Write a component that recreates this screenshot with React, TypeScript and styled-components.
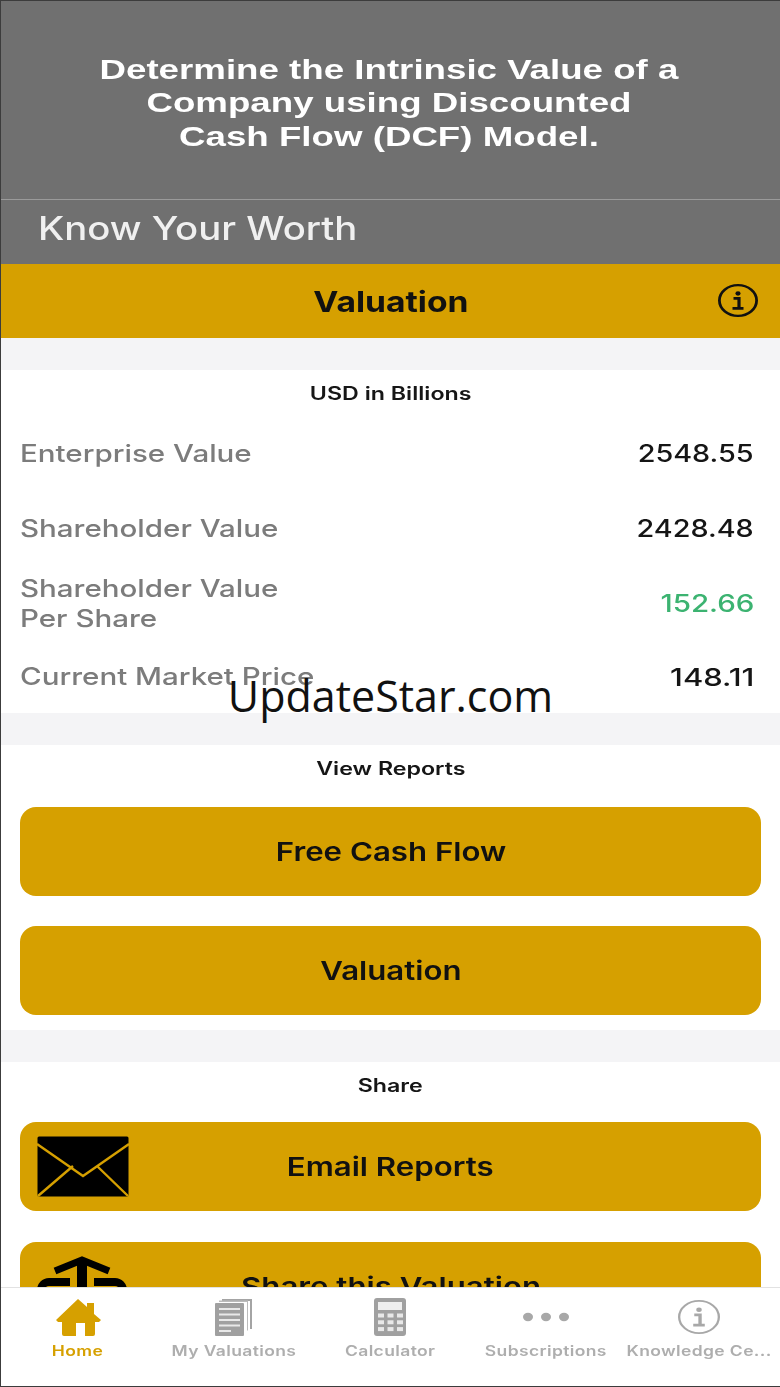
import React from 'react';
import styled, { createGlobalStyle } from 'styled-components';

const GOLD = '#d6a000';

const GlobalStyle = createGlobalStyle`
  html, body {
    margin: 0;
    padding: 0;
    height: 100%;
    background: #fff;
  }
  #root {
    height: 100%;
  }
`;

const Frame = styled.div`
  position: relative;
  box-sizing: border-box;
  width: 780px;
  height: 1387px;
  overflow: hidden;
  background: #fff;
  border-left: 1px solid #3c3c3c;
  border-top: 1px solid #3c3c3c;
  border-bottom: 1px solid #3c3c3c;
  font-family: Inter, 'Liberation Sans', sans-serif;
`;

// the source capture is soft, so the app screen is blurred a little
const Screen = styled.div`
  height: 100%;
  display: flex;
  flex-direction: column;
  filter: blur(0.55px);
`;

// the source capture is also stretched sideways
const Wide = styled.span<{ $scale: number; $origin?: string }>`
  display: inline-block;
  white-space: nowrap;
  transform: scaleX(${(p) => p.$scale});
  transform-origin: ${(p) => p.$origin || 'center'};
`;

const Hero = styled.div`
  height: 199px;
  flex: none;
  display: flex;
  align-items: center;
  justify-content: center;
  padding: 6px 3px 0 0;
  box-sizing: border-box;
  background: #707070;
  border-bottom: 1px solid #9a9a9a;
`;

const HeroTitle = styled.h1`
  margin: 0;
  color: #fff;
  font-family: 'Liberation Sans', Arial, sans-serif;
  font-size: 28px;
  font-weight: 700;
  line-height: 33.5px;
  text-align: center;
  transform: scaleX(1.31);
`;

const BrandBar = styled.div`
  height: 64px;
  flex: none;
  box-sizing: border-box;
  display: flex;
  align-items: center;
  padding: 0 0 9px 37px;
  background: #707070;
  color: #f0f0f0;
  font-size: 33px;
  font-weight: 500;
`;

const NavBar = styled.div`
  position: relative;
  height: 74px;
  flex: none;
  display: flex;
  align-items: center;
  justify-content: center;
  background: ${GOLD};
  color: #111;
  font-size: 29px;
  font-weight: 700;
`;

const NavInfo = styled.span`
  position: absolute;
  right: 22px;
  top: 20px;
  display: flex;
`;

const Content = styled.div`
  flex: 1;
  min-height: 0;
  overflow: hidden;
`;

const Sections = styled.div`
  display: flex;
  flex-direction: column;
  gap: 32px;
  padding-top: 32px;
  background: #f4f4f6;
`;

const Section = styled.section`
  background: #fff;
`;

const SectionTitle = styled.div`
  height: 46px;
  display: flex;
  align-items: center;
  justify-content: center;
  color: #161616;
  font-size: 18px;
  font-weight: 600;
`;

const ValueRow = styled.div<{ $height: number }>`
  height: ${(p) => p.$height}px;
  display: flex;
  align-items: center;
  justify-content: space-between;
  padding: 0 26px 0 19px;
`;

const ValueLabel = styled.span`
  color: #7c7c7c;
  font-size: 24px;
  font-weight: 500;
  line-height: 30px;
`;

const ValueNumber = styled.span<{ $green?: boolean }>`
  color: ${(p) => (p.$green ? '#3cb371' : '#151515')};
  font-size: 24px;
  font-weight: 500;
`;

const Buttons = styled.div<{ $top: number; $gap: number }>`
  display: flex;
  flex-direction: column;
  gap: ${(p) => p.$gap}px;
  padding: ${(p) => p.$top}px 19px 15px;
`;

const ActionButton = styled.button`
  position: relative;
  height: 89px;
  flex: none;
  display: flex;
  align-items: center;
  justify-content: center;
  padding: 0;
  border: none;
  border-radius: 16px;
  background: ${GOLD};
  color: #111;
  font-family: inherit;
  font-size: 26px;
  font-weight: 600;
`;

const ButtonIcon = styled.span`
  position: absolute;
  left: 17px;
  top: 14px;
  display: flex;
`;

const TabBar = styled.nav`
  height: 98px;
  flex: none;
  display: grid;
  grid-template-columns: 154px 157px 156px 155px 152px;
  background: #fff;
  border-top: 1px solid #e2e2e2;
`;

const Tab = styled.div<{ $active?: boolean }>`
  display: flex;
  flex-direction: column;
  align-items: center;
  color: ${(p) => (p.$active ? GOLD : '#aeaeae')};
  min-width: 0;
`;

const TabIcon = styled.span`
  height: 48px;
  margin-top: 5px;
  display: flex;
  align-items: center;
  justify-content: center;
`;

const TabLabel = styled.span`
  margin-top: 1px;
  font-size: 14px;
  font-weight: 600;
  letter-spacing: 0.3px;
`;

const Watermark = styled.div`
  position: absolute;
  left: 0;
  right: 0;
  top: 666px;
  text-align: center;
  color: #111;
  font-family: 'Open Sans', sans-serif;
  font-size: 43px;
  line-height: 58px;
`;

function InfoIcon({ width, height, color, stroke }: { width: number; height: number; color: string; stroke: number }) {
  return (
    <svg width={width} height={height} viewBox="0 0 40 40" preserveAspectRatio="none" fill="none">
      <circle cx="20" cy="20" r={20 - stroke / 2} stroke={color} strokeWidth={stroke} />
      <circle cx="20" cy="11.5" r="2.6" fill={color} />
      <path d="M15.5 17.5h5.5v11.5M14.5 29.5h11" stroke={color} strokeWidth="3.2" />
    </svg>
  );
}

function EnvelopeIcon() {
  return (
    <svg width="92" height="61" viewBox="0 0 92 61">
      <rect x="0.5" y="0.5" width="91" height="60" rx="1.5" fill="#000" />
      <path d="M0 8l46 32L92 8M1 60l35-30M91 60L60 30" fill="none" stroke={GOLD} strokeWidth="2.4" />
    </svg>
  );
}

function ShareIcon() {
  return (
    <svg width="93" height="61" viewBox="0 0 93 61" fill="none" stroke="#000">
      <path d="M18 15L45 4L72 15" strokeWidth="7" />
      <path d="M45 4V61" strokeWidth="10" />
      <path d="M33 26H12a8 8 0 0 0-8 8V61M57 26H78a8 8 0 0 1 8 8V61" strokeWidth="8" />
    </svg>
  );
}

function HomeIcon() {
  return (
    <svg width="45" height="37" viewBox="0 0 45 37" fill="currentColor">
      <path d="M0 21L22 0l9 8V4h7v11l7 6-2 2h-4v12a2 2 0 0 1-2 2H29V24h-9v13H8a2 2 0 0 1-2-2V23H2z" />
    </svg>
  );
}

function DocsIcon() {
  return (
    <svg width="37" height="38" viewBox="0 0 37 38">
      <path d="M7 1h30v30h-2V3H7z" fill="#a4a4a4" />
      <path d="M4 2.500h29v30h-1V4H4z" fill="#bbb" />
      <rect x="0" y="5" width="29" height="33" rx="1" fill="#a0a0a0" />
      <path d="M4 11h21M4 16.500h21M4 22h21M4 27.500h21M4 33h12" stroke="#e8e8e8" strokeWidth="2" />
    </svg>
  );
}

function CalculatorIcon() {
  const keys = [];
  for (let row = 0; row < 3; row++) {
    for (let col = 0; col < 3; col++) {
      keys.push(<rect key={`${row}-${col}`} x={4 + col * 9.500} y={15.500 + row * 6.800} width="6" height="4" fill="#e8e8e8" />);
    }
  }
  return (
    <svg width="32" height="38" viewBox="0 0 32 38">
      <rect width="32" height="38" rx="3" fill="#a0a0a0" />
      <rect x="4" y="4" width="24" height="8" fill="#eee" />
      {keys}
    </svg>
  );
}

function DotsIcon() {
  return (
    <svg width="46" height="10" viewBox="0 0 46 10" fill="#a8a8a8">
      <ellipse cx="5" cy="5" rx="5" ry="4.200" />
      <ellipse cx="23" cy="5" rx="5" ry="4.200" />
      <ellipse cx="41" cy="5" rx="5" ry="4.200" />
    </svg>
  );
}

function App() {
  return (
    <>
      <GlobalStyle />
      <Frame>
        <Screen>
          <Hero>
            <HeroTitle>
              Determine the Intrinsic Value of a
              <br />
              Company using Discounted
              <br />
              Cash Flow (DCF) Model.
            </HeroTitle>
          </Hero>
          <BrandBar>
            <Wide $scale={1.16} $origin="left">Know Your Worth</Wide>
          </BrandBar>
          <NavBar>
            <Wide $scale={1.16}>Valuation</Wide>
            <NavInfo>
              <InfoIcon width={40} height={33} color="#111" stroke={2.8} />
            </NavInfo>
          </NavBar>
          <Content>
            <Sections>
              <Section>
                <SectionTitle>
                  <Wide $scale={1.29}>USD in Billions</Wide>
                </SectionTitle>
                <ValueRow $height={75}>
                  <ValueLabel><Wide $scale={1.23} $origin="left">Enterprise Value</Wide></ValueLabel>
                  <ValueNumber><Wide $scale={1.2} $origin="right">2548.55</Wide></ValueNumber>
                </ValueRow>
                <ValueRow $height={75}>
                  <ValueLabel><Wide $scale={1.23} $origin="left">Shareholder Value</Wide></ValueLabel>
                  <ValueNumber><Wide $scale={1.2} $origin="right">2428.48</Wide></ValueNumber>
                </ValueRow>
                <ValueRow $height={75}>
                  <ValueLabel>
                    <Wide $scale={1.23} $origin="left">
                      Shareholder Value
                      <br />
                      Per Share
                    </Wide>
                  </ValueLabel>
                  <ValueNumber $green><Wide $scale={1.23} $origin="right">152.66</Wide></ValueNumber>
                </ValueRow>
                <ValueRow $height={72}>
                  <ValueLabel><Wide $scale={1.23} $origin="left">Current Market Price</Wide></ValueLabel>
                  <ValueNumber><Wide $scale={1.29} $origin="right">148.11</Wide></ValueNumber>
                </ValueRow>
              </Section>
              <Section>
                <SectionTitle>
                  <Wide $scale={1.29}>View Reports</Wide>
                </SectionTitle>
                <Buttons $top={16} $gap={30}>
                  <ActionButton><Wide $scale={1.2}>Free Cash Flow</Wide></ActionButton>
                  <ActionButton><Wide $scale={1.2}>Valuation</Wide></ActionButton>
                </Buttons>
              </Section>
              <Section>
                <SectionTitle>
                  <Wide $scale={1.29}>Share</Wide>
                </SectionTitle>
                <Buttons $top={14} $gap={31}>
                  <ActionButton>
                    <ButtonIcon>
                      <EnvelopeIcon />
                    </ButtonIcon>
                    <Wide $scale={1.2}>Email Reports</Wide>
                  </ActionButton>
                  <ActionButton>
                    <ButtonIcon>
                      <ShareIcon />
                    </ButtonIcon>
                    <Wide $scale={1.2}>Share this Valuation</Wide>
                  </ActionButton>
                </Buttons>
              </Section>
            </Sections>
          </Content>
          <TabBar>
            <Tab $active>
              <TabIcon>
                <HomeIcon />
              </TabIcon>
              <TabLabel><Wide $scale={1.25}>Home</Wide></TabLabel>
            </Tab>
            <Tab>
              <TabIcon>
                <DocsIcon />
              </TabIcon>
              <TabLabel><Wide $scale={1.25}>My Valuations</Wide></TabLabel>
            </Tab>
            <Tab>
              <TabIcon>
                <CalculatorIcon />
              </TabIcon>
              <TabLabel><Wide $scale={1.25}>Calculator</Wide></TabLabel>
            </Tab>
            <Tab>
              <TabIcon>
                <DotsIcon />
              </TabIcon>
              <TabLabel><Wide $scale={1.25}>Subscriptions</Wide></TabLabel>
            </Tab>
            <Tab>
              <TabIcon>
                <InfoIcon width={42} height={34} color="#a8a8a8" stroke={2.2} />
              </TabIcon>
              <TabLabel><Wide $scale={1.25}>Knowledge Ce...</Wide></TabLabel>
            </Tab>
          </TabBar>
        </Screen>
        <Watermark>UpdateStar.com</Watermark>
      </Frame>
    </>
  );
}

export default App;
